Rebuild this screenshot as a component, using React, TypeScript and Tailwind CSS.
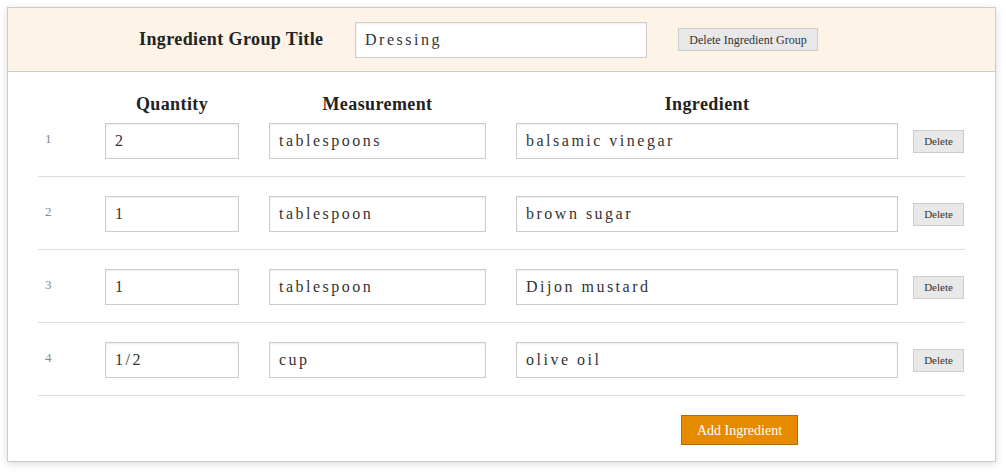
import React from "react";

const rows = [
  { qty: "2", unit: "tablespoons", name: "balsamic vinegar" },
  { qty: "1", unit: "tablespoon", name: "brown sugar" },
  { qty: "1", unit: "tablespoon", name: "Dijon mustard" },
  { qty: "1/2", unit: "cup", name: "olive oil" },
];

const serif = "font-['Georgia','Liberation_Serif','DejaVu_Serif',serif]";

const inputCls =
  "h-[36px] border border-[#cccccc] bg-white px-[9px] text-[16px] tracking-[2.5px] text-[#333333] shadow-[inset_0_1px_2px_rgba(0,0,0,0.08)] outline-none";

export default function App() {
  return (
    <div className={`min-h-screen bg-white pt-[7px] pl-[7px] ${serif}`}>
      <div className="w-[989px] border border-[#cccccc] bg-white shadow-[0_2px_8px_rgba(0,0,0,0.14)]">
        {/* group title band */}
        <div className="flex h-[64px] items-center border-b border-[#cccccc] bg-[#fdf3e6] pl-[131px]">
          <div className="w-[216px] text-[18px] font-bold tracking-[0.4px] text-[#222222]">Ingredient Group Title</div>
          <input className={`${inputCls} w-[292px]`} defaultValue="Dressing" />
          <button className="ml-[31px] h-[23px] w-[140px] border border-[#cccccc] bg-[#e8e8e8] text-[12px] text-[#333333]">
            Delete Ingredient Group
          </button>
        </div>

        <div className="px-[30px] pt-[20px]">
          {/* column headers */}
          <div className="flex h-[24px] items-center text-[18px] font-bold tracking-[0.4px] text-[#222222]">
            <div className="w-[67px]" />
            <div className="w-[134px] text-center">Quantity</div>
            <div className="ml-[30px] w-[217px] text-center">Measurement</div>
            <div className="ml-[30px] w-[382px] text-center">Ingredient</div>
          </div>

          {rows.map((r, i) => (
            <div
              key={i}
              className={`flex items-center border-b border-[#dddddd] pb-[17px] ${i === 0 ? "pt-[7px]" : "pt-[19px]"}`}
            >
              <div className="-mt-[4px] w-[67px] pl-[7px] text-[13px] text-[#888888]">{i + 1}</div>
              <input className={`${inputCls} w-[134px]`} defaultValue={r.qty} />
              <input className={`${inputCls} ml-[30px] w-[217px]`} defaultValue={r.unit} />
              <input className={`${inputCls} ml-[30px] w-[382px]`} defaultValue={r.name} />
              <button className="ml-[15px] h-[23px] w-[51px] border border-[#cccccc] bg-[#e8e8e8] text-[11px] text-[#333333]">
                Delete
              </button>
            </div>
          ))}

          <div className="pt-[19px] pb-[16px] pl-[643px]">
            <button className="h-[30px] w-[117px] border border-[#b36b00] bg-[#e68a00] text-[14px] text-white">
              Add Ingredient
            </button>
          </div>
        </div>
      </div>
    </div>
  );
}
